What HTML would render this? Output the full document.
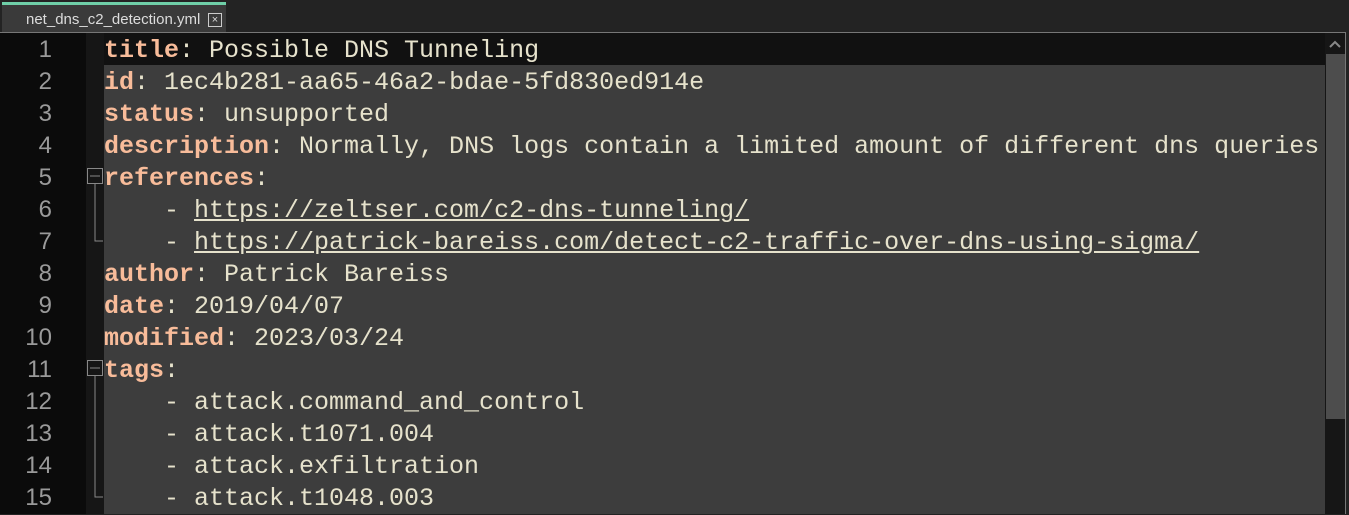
<!DOCTYPE html>
<html><head><style>
body{margin:0;width:1349px;height:514px;background:#232323;overflow:hidden;position:relative;font-family:"Liberation Mono",monospace}
.tab{position:absolute;left:2px;top:2px;width:224px;height:30px;background:#3a3a3a;border-top:3px solid #6fcfa8;box-sizing:border-box}
.tab span{position:absolute;left:24px;top:6px;font:15px "Liberation Sans",sans-serif;color:#dcdcdc}
.x{position:absolute;left:206px;top:8px;width:12px;height:12px;border:1px solid #ccc;color:#ddd;font:11px/12px "Liberation Sans";text-align:center}
.ed{position:absolute;left:0;top:32px;width:1346px;height:482px;border-top:1px solid #777;border-right:1px solid #777;background:#3d3d3d;box-sizing:border-box}
.gut{position:absolute;left:0;top:0;width:86px;height:100%;background:#0b0b0b}
.fold{position:absolute;left:86px;top:0;width:18px;height:100%;background:#161616}
.hl{position:absolute;left:104px;top:0;width:1221px;height:32px;background:#111}
.ln{position:absolute;left:0;width:52px;text-align:right;font:24px "Liberation Sans",sans-serif;color:#9a9a9a;height:32px;line-height:32px;margin-top:1px}
.l{position:absolute;left:104px;height:32px;line-height:32px;font-size:25px;color:#e6e2cc;white-space:pre;margin-top:2px}
.k{color:#f8bc9a;font-weight:bold}
u{text-decoration:underline}
.sb{position:absolute;left:1325px;top:0;width:20px;height:100%;background:#161616}
.th{position:absolute;left:1326px;top:21px;width:19px;height:365px;background:#4d4d4d}
</style></head><body>
<div class="tab"><span>net_dns_c2_detection.yml</span><div class="x">×</div></div>
<div class="ed">
<div class="gut"></div><div class="fold"></div><div class="hl"></div>
<div class="sb"></div><div class="th"></div>
<svg style="position:absolute;left:1328px;top:6px" width="14" height="10"><path d="M2 8 L7 3 L12 8" stroke="#888" stroke-width="2" fill="none"/></svg>
<svg style="position:absolute;left:86px;top:0" width="18" height="482"><g stroke="#888" fill="none" stroke-width="1"><rect x="1.5" y="135.5" width="15" height="15"/><path d="M4 143H14M9 151V208H17"/><rect x="1.5" y="327.5" width="15" height="15"/><path d="M4 335H14M9 343V464H17"/></g></svg>
<div class="ln" style="top:0">1</div><div class="ln" style="top:32px">2</div><div class="ln" style="top:64px">3</div><div class="ln" style="top:96px">4</div><div class="ln" style="top:128px">5</div><div class="ln" style="top:160px">6</div><div class="ln" style="top:192px">7</div><div class="ln" style="top:224px">8</div><div class="ln" style="top:256px">9</div><div class="ln" style="top:288px">10</div><div class="ln" style="top:320px">11</div><div class="ln" style="top:352px">12</div><div class="ln" style="top:384px">13</div><div class="ln" style="top:416px">14</div><div class="ln" style="top:448px">15</div>
<div class="l" style="top:0"><span class="k">title</span>: Possible DNS Tunneling</div>
<div class="l" style="top:32px"><span class="k">id</span>: 1ec4b281-aa65-46a2-bdae-5fd830ed914e</div>
<div class="l" style="top:64px"><span class="k">status</span>: unsupported</div>
<div class="l" style="top:96px"><span class="k">description</span>: Normally, DNS logs contain a limited amount of different dns queries</div>
<div class="l" style="top:128px"><span class="k">references</span>:</div>
<div class="l" style="top:160px">    - <u>https://zeltser.com/c2-dns-tunneling/</u></div>
<div class="l" style="top:192px">    - <u>https://patrick-bareiss.com/detect-c2-traffic-over-dns-using-sigma/</u></div>
<div class="l" style="top:224px"><span class="k">author</span>: Patrick Bareiss</div>
<div class="l" style="top:256px"><span class="k">date</span>: 2019/04/07</div>
<div class="l" style="top:288px"><span class="k">modified</span>: 2023/03/24</div>
<div class="l" style="top:320px"><span class="k">tags</span>:</div>
<div class="l" style="top:352px">    - attack.command_and_control</div>
<div class="l" style="top:384px">    - attack.t1071.004</div>
<div class="l" style="top:416px">    - attack.exfiltration</div>
<div class="l" style="top:448px">    - attack.t1048.003</div>
</div>
</body></html>
